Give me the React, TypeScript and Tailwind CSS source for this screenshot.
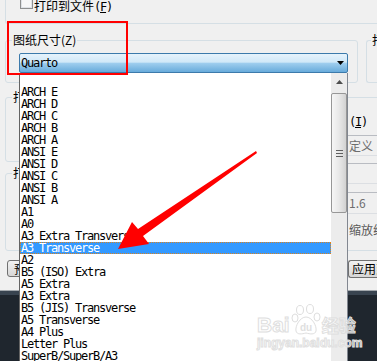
const mono = "font-['DejaVu_Sans_Mono','Liberation_Mono',monospace] text-[12px] tracking-[-1.22px]";
const cjk = "font-['Noto_Sans_CJK_SC','Noto_Sans_CJK_JP',sans-serif] text-[12px]";

const sizes = [
  "ARCH E",
  "ARCH D",
  "ARCH C",
  "ARCH B",
  "ARCH A",
  "ANSI E",
  "ANSI D",
  "ANSI C",
  "ANSI B",
  "ANSI A",
  "A1",
  "A0",
  "A3 Extra Transverse",
  "A3 Transverse",
  "A2",
  "B5 (ISO) Extra",
  "A5 Extra",
  "A3 Extra",
  "B5 (JIS) Transverse",
  "A5 Transverse",
  "A4 Plus",
  "Letter Plus",
  "SuperB/SuperB/A3",
];
const selected = "A3 Transverse";

function GroupLabel({ text, ml = "ml-[6px]" }: { text: string; ml?: string }) {
  return (
    <div className={`-mt-[8px] ${ml} w-fit whitespace-nowrap bg-[#f0f0f0] px-[1px] h-[14px] leading-[14px] text-black ${cjk}`}>
      {text}
    </div>
  );
}

function Field({ text, h }: { text?: string; h: string }) {
  return (
    <div className={`${h} border-y border-t-[#b9bcc2] border-b-[#dcdfe3] pl-[1px] text-[#6d6d6d] flex items-center whitespace-nowrap`}>
      {text}
    </div>
  );
}

export default function App() {
  return (
    <div className="relative w-[377px] h-[361px] overflow-hidden bg-[#f0f0f0] flex flex-col">
      {/* printer group, only its bottom part is on screen */}
      <div className="ml-[5px] h-[24px] shrink-0 border-l border-b border-[#d5dfe5] rounded-bl-[3px] flex items-start">
        <div className="-mt-[4px] ml-[14px] flex items-start">
          <div className="w-[13px] h-[13px] border border-[#8e8f8f] bg-[#f7f7f7] shadow-[inset_0_0_0_1px_#dfe2e6]" />
          <span className={`ml-[1px] mt-[3px] leading-[14px] text-black ${cjk}`}>
            打印到文件<span className={mono}>(<u>F</u>)</span>
          </span>
        </div>
      </div>

      <div className="mt-[16px] flex h-[43px] shrink-0">
        <div className="ml-[5px] w-[353px] shrink-0 h-full border border-[#d5dfe5] rounded-[3px] flex flex-col items-start">
          <GroupLabel text="图纸尺寸(Z)" />
          <div className="ml-[13px] mt-[6px] w-[329px] h-[20px] border border-[#3c7aab] rounded-[2px] bg-[linear-gradient(to_bottom,#e6f3fc_0%,#d0e8f8_45%,#9ecdee_52%,#68abdb_100%)] flex items-center justify-between pl-[1px] pr-[3px]">
            <span className={`${mono} text-black leading-[18px]`}>Quarto</span>
            <svg width="7" height="4" viewBox="0 0 7 4">
              <polygon points="0,0 7,0 3.5,4" fill="#000" />
            </svg>
          </div>
        </div>
        <div className="ml-[8px] flex-1 min-w-0 h-full border-y border-l border-[#d5dfe5] rounded-l-[3px] flex flex-col items-start">
          <GroupLabel text="打印份数(B)" ml="ml-[4px]" />
        </div>
      </div>

      <div className="flex h-[207px] shrink-0">
        {/* left edge of the dialog, the rest is under the open list */}
        <div className="w-[19px] shrink-0 overflow-hidden">
          <div className="w-[340px] flex flex-col items-start">
            <div className="mt-[14px] ml-[5px] w-[330px] h-[65px] border border-[#d5dfe5] rounded-[3px] flex flex-col items-start">
              <GroupLabel text="打印区域" />
            </div>
            <div className="mt-[11px] ml-[5px] w-[330px] h-[78px] border border-[#d5dfe5] rounded-[3px] flex flex-col items-start">
              <GroupLabel text="打印偏移" />
            </div>
            <div className={`mt-[9px] ml-[7px] h-[17px] w-[80px] border border-[#707070] rounded-[3px] bg-[linear-gradient(to_bottom,#f2f2f2,#e4e4e4_50%,#d6d6d6)] pl-[6px] leading-[15px] text-black ${cjk}`}>
              预览(P)...
            </div>
          </div>
        </div>
        <div className="w-[329px] shrink-0" />

        <div className={`flex-1 min-w-0 overflow-hidden flex flex-col text-black ${cjk}`}>
          <div className="mt-[14px] h-[38px] border-t border-[#d5dfe5] pt-[14px] pl-[1px]">
            <span className={`${mono} leading-[14px]`}>(<u>I</u>)</span>
          </div>
          <Field h="h-[21px]" text="定义" />
          <div className="mt-[7px]">
            <Field h="h-[21px]" />
          </div>
          <div className="mt-[8px]">
            <Field h="h-[22px]" text="1.6" />
          </div>
          <div className="mt-[9px] pl-[1px] leading-[14px] text-[#5a5a5a] whitespace-nowrap">缩放线宽</div>
          <div className="mt-[13px] border-t border-[#d5dfe5]" />
          <div className="mt-[9px] h-[18px] border border-r-0 border-[#707070] rounded-l-[3px] bg-[linear-gradient(to_bottom,#f2f2f2,#e4e4e4_50%,#d6d6d6)] pl-[3px] leading-[16px] whitespace-nowrap">
            应用到布局
          </div>
        </div>
      </div>

      <div className="h-[1px] bg-[#a3a8ad]" />
      <div className="h-[4px] bg-[#394450]" />
      <div className="flex-1 bg-[#1f262e]" />

      {/* open dropdown list */}
      <div className="absolute left-[19px] top-[73px] w-[329px] h-[300px] bg-white border-l border-r border-l-[#646464] border-r-[#828790] flex">
        <div className="w-[311px] pt-[13px]">
          {sizes.map((s) =>
            s === selected ? (
              <div
                key={s}
                className={`h-[12px] leading-[10px] border border-dotted border-[#d9821f] bg-[#3399ff] text-white whitespace-pre ${mono}`}
              >
                {s}
              </div>
            ) : (
              <div key={s} className={`h-[12px] leading-[12px] pl-[1px] text-black whitespace-pre ${mono}`}>
                {s}
              </div>
            )
          )}
        </div>
        <div className="w-[16px] bg-[#ececec] flex flex-col">
          <div className="h-[17px] flex items-center justify-center pl-[1px]">
            <svg width="7" height="4" viewBox="0 0 7 4">
              <polygon points="3.5,0 7,4 0,4" fill="#4d4d4d" />
            </svg>
          </div>
          <div className="mt-[3px] h-[120px] border border-[#979797] rounded-[2px] bg-[linear-gradient(to_right,#f6f6f6,#e8e8e8_50%,#d2d2d2)] flex flex-col items-center justify-center gap-[2px]">
            <div className="w-[7px] h-[1px] bg-[#5f5f5f]" />
            <div className="w-[7px] h-[1px] bg-[#5f5f5f]" />
            <div className="w-[7px] h-[1px] bg-[#5f5f5f]" />
          </div>
        </div>
      </div>

      {/* annotation: red frame */}
      <div className="absolute left-[7px] top-[21px] w-[121px] h-[54px] border-2 border-[#ff0000]" />

      {/* annotation: red arrow */}
      <svg className="absolute left-0 top-0 pointer-events-none" width="377" height="361" viewBox="0 0 377 361">
        <polygon
          points="256,151 138,229 132,222 118,249 149,244 143,236 257,153"
          fill="#ff0000"
        />
      </svg>

      {/* watermark */}
      <div className="absolute left-[257px] top-[304px] pointer-events-none flex flex-col">
        <div className="flex items-end">
          <span className="font-['Liberation_Sans',sans-serif] font-bold text-[21px] leading-[22px] text-white/60 [-webkit-text-stroke:1px_#dedede]">
            Bai
          </span>
          <svg width="30" height="32" viewBox="0 0 30 32" className="mx-[1px]">
            <g fill="rgba(255,255,255,0.6)" stroke="#dedede" strokeWidth="1">
              <ellipse cx="9" cy="6" rx="3.5" ry="4.5" />
              <ellipse cx="19" cy="5" rx="3.5" ry="4.5" />
              <ellipse cx="4" cy="14" rx="3" ry="4" />
              <ellipse cx="26" cy="13" rx="3" ry="4" />
              <path d="M15 13 C 9 13, 4 22, 5 27 C 6 31, 11 30, 15 29 C 19 30, 24 31, 25 27 C 26 22, 21 13, 15 13 Z" />
            </g>
            <text x="15" y="27" textAnchor="middle" fontFamily="Liberation Sans, sans-serif" fontWeight="bold" fontSize="10" fill="#e0e0e0">
              du
            </text>
          </svg>
          <span className="font-['Noto_Sans_CJK_SC',sans-serif] font-bold text-[17px] leading-[22px] text-white/60 [-webkit-text-stroke:1px_#dedede]">
            经验
          </span>
        </div>
        <span className="mt-[1px] font-['Liberation_Sans',sans-serif] font-bold text-[12px] leading-[13px] text-white/60 [-webkit-text-stroke:1px_#e0e0e0]">
          jingyan.baidu.com
        </span>
      </div>
    </div>
  );
}
